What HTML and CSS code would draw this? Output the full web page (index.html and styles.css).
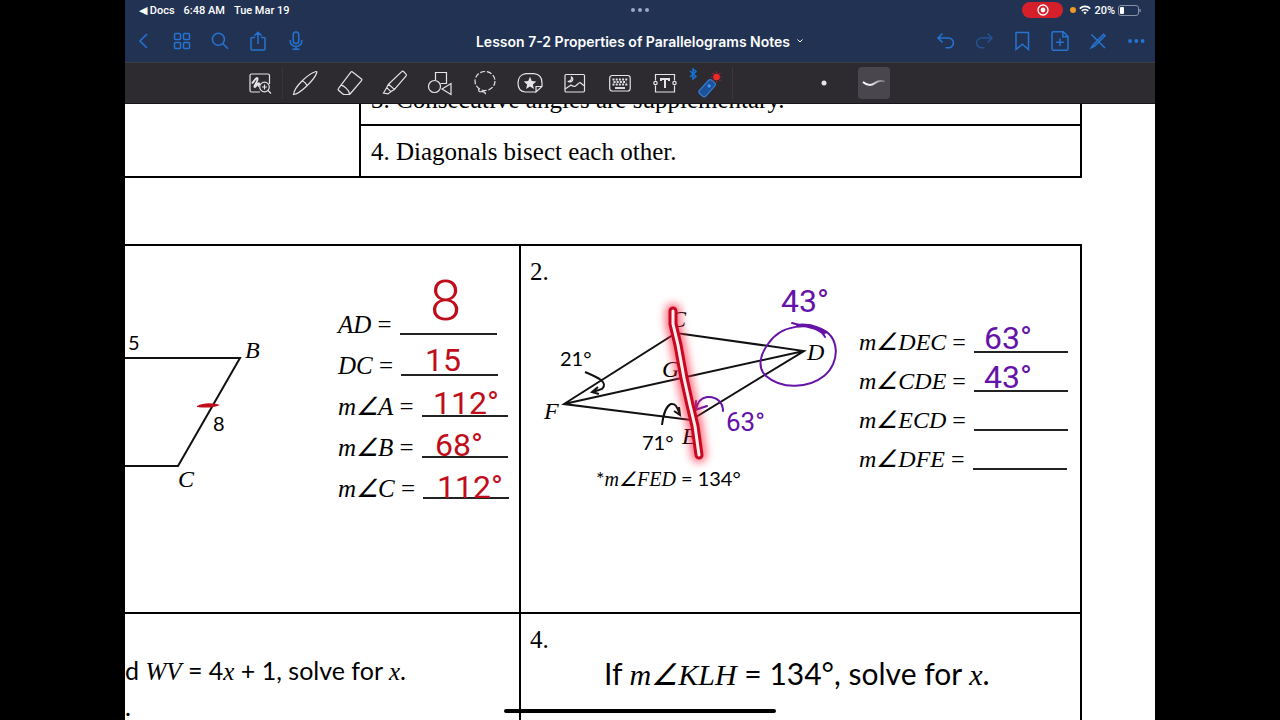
FILE: index.html
```html
<!DOCTYPE html>
<html lang="en">
<head>
  <meta charset="UTF-8">
  <title>Lesson 7-2 Properties of Parallelograms Notes</title>
  <link rel="stylesheet" href="styles.css">
</head>
<body>
  <div class="tablet">
    <header class="titlebar">
      <div class="status">
        <div class="status-left">
          <a href="#docs">◀ Docs</a>
          <span>6:48 AM</span>
          <span>Tue Mar 19</span>
        </div>
        <div class="status-dots"><i></i><i></i><i></i></div>
        <div class="status-right">
          <span class="recording">
            <svg width="12" height="12" viewBox="0 0 12 12"><circle cx="6" cy="6" r="5" fill="none" stroke="#fff" stroke-width="1.3"/><circle cx="6" cy="6" r="2.4" fill="#fff"/></svg>
          </span>
          <span class="mic-dot"></span>
          <svg width="12" height="10" viewBox="0 0 12 10" fill="none" stroke="#fff" stroke-width="1.7"><path d="M.8 3.6a7.4 7.4 0 0 1 10.4 0M2.8 5.8a4.6 4.6 0 0 1 6.4 0"/><path d="M6 9.4 4.4 7.6a2.3 2.3 0 0 1 3.2 0z" fill="#fff" stroke="none"/></svg>
          <span>20%</span>
          <svg width="23" height="11" viewBox="0 0 23 11"><rect x=".5" y=".5" width="20" height="10" rx="2.5" fill="none" stroke="#8791a5"/><rect x="2" y="2" width="4" height="7" rx="1" fill="#fff"/><path d="M22 4v3" stroke="#8791a5" stroke-width="1.4"/></svg>
        </div>
      </div>
      <nav class="nav">
        <div class="nav-group">
          <button aria-label="Back"><svg viewBox="0 0 20 20"><path d="M13 3 6 10l7 7"/></svg></button>
          <button aria-label="Pages"><svg viewBox="0 0 20 20"><rect x="2.5" y="2.5" width="6" height="6" rx="1"/><rect x="11.5" y="2.5" width="6" height="6" rx="1"/><rect x="2.5" y="11.5" width="6" height="6" rx="1"/><rect x="11.5" y="11.5" width="6" height="6" rx="1"/></svg></button>
          <button aria-label="Search"><svg viewBox="0 0 20 20"><circle cx="8.4" cy="8.2" r="6"/><path d="m13 12.8 5 5"/></svg></button>
          <button aria-label="Share"><svg viewBox="0 0 20 20"><path d="M7 6.5H4a1 1 0 0 0-1 1V18a1 1 0 0 0 1 1h12a1 1 0 0 0 1-1V7.500a1 1 0 0 0-1-1h-3M10 13V1.500M6.500 4.600 10 1.200l3.500 3.400"/></svg></button>
          <button aria-label="Record audio"><svg viewBox="0 0 20 20"><rect x="7.200" y="1" width="5.600" height="11.500" rx="2.800"/><path d="M4.200 9v1.200a5.800 5.200 0 0 0 11.600 0V9M10 15.500V18M6.500 18.300h7"/></svg></button>
        </div>
        <button class="doc-title">Lesson 7-2 Properties of Parallelograms Notes
          <svg viewBox="0 0 8 6"><path d="M1.500 1.500 4 4l2.500-2.500"/></svg>
        </button>
        <div class="nav-group nav-right">
          <button aria-label="Undo"><svg viewBox="0 0 20 20"><path d="M6.500 2.500 2 7l4.500 4.500M2 7h10.500a4.900 4.900 0 0 1 0 9.800H9.500"/></svg></button>
          <button aria-label="Redo" disabled><svg viewBox="0 0 20 20"><path d="M13.500 2.500 18 7l-4.500 4.500M18 7H7.500a4.900 4.900 0 0 0 0 9.800h3"/></svg></button>
          <button aria-label="Bookmark"><svg viewBox="0 0 20 20"><path d="M4 1.500h12.500v17l-6.200-5.300L4 18.500z"/></svg></button>
          <button aria-label="Add page"><svg viewBox="0 0 20 20"><path d="M3.500.7h9.700L18 5.500v12.200a1.500 1.500 0 0 1-1.500 1.500h-13A1.500 1.500 0 0 1 2 17.700V2.200A1.500 1.500 0 0 1 3.500.7zM12.800.9v4.900h5M10 7.500v7.600M6.200 11.300h7.600"/></svg></button>
          <button aria-label="Drawing tools"><svg viewBox="0 0 20 20"><path d="M3.500 3.500 17 17M3.500 16.500l2-3L15.500 3.300l1.500 1.400L7 14.800z"/></svg></button>
          <button aria-label="More"><svg viewBox="0 0 20 20" class="solid"><circle cx="4" cy="10" r="1.900"/><circle cx="10.300" cy="10" r="1.900"/><circle cx="16.600" cy="10" r="1.900"/></svg></button>
        </div>
      </nav>
    </header>

    <div class="toolbar">
      <button aria-label="Zoom window"><svg viewBox="0 0 26 26"><path d="M22.500 14V5.500a1.500 1.500 0 0 0-1.500-1.500H4.500A1.500 1.500 0 0 0 3 5.500v15A1.500 1.500 0 0 0 4.500 22H13"/><path d="M5 13.500c2-2.500 4.500-6.500 5.500-5.200 1.300 1.600-4.300 8.500-2.800 8.700 1.300.1 3-4.500 4.300-3.700.8.500-1.200 3 .2 3" stroke-width="1.900"/><circle cx="17.500" cy="17" r="4.800"/><path d="m21 20.500 3 3M17.500 14.600v4.800M15.100 17h4.800"/></svg></button>
      <button aria-label="Pen" class="divided"><svg viewBox="0 0 26 26"><path d="M1.500 24.500c.5-3.500 3.500-8.500 8-13C14.500 6.500 20 2.500 24 1.500c.7-.1 1 .3.800 1-1 3.500-5.300 9-10.300 13.700-4.500 4.300-9 7.800-13 8.300zM10.200 10.800c2 .8 3.800 2.500 4.800 4.700"/></svg></button>
      <button aria-label="Eraser"><svg viewBox="0 0 26 26"><path d="M15.200 1.800 24.500 9a1 1 0 0 1 .2 1.300L13.500 23.500c-.6.700-1.300 1-2.200 1H7.500c-.8 0-1.300-.2-1.900-.7l-3.800-3.300a1.500 1.500 0 0 1-.2-2.100L14 2a1 1 0 0 1 1.200-.2zM4 15.200c3 .6 7.700 4.200 8.600 8.600"/></svg></button>
      <button aria-label="Highlighter"><svg viewBox="0 0 26 26"><path d="M21.500 1.500 24 4.200c.5.600.5 1.200.1 1.800L12.500 19.500l-6-5.300L19.700 1.600a1.200 1.200 0 0 1 1.800-.1zM6.500 14.200l-1.800 3.500 4.300 3.900 3.500-2.100M4.700 17.700 1.500 23l4.500.9 3-2.300"/></svg></button>
      <button aria-label="Shapes"><svg viewBox="0 0 26 26"><path d="M8.500 10V2.500h11V12M8.500 2.500h11v11h-6"/><circle cx="7.500" cy="16.500" r="6"/><path d="M24 13.500v11l-9-5.500z"/></svg></button>
      <button aria-label="Lasso"><svg viewBox="0 0 26 26"><ellipse cx="13" cy="11" rx="10" ry="9.500" stroke-dasharray="5 1.800"/><path d="M7 18.500c-1.500 3 .5 3.500 3 3.200 2-.2 3.300.8 3.500 2.500"/></svg></button>
      <button aria-label="Elements"><svg viewBox="0 0 26 26"><path d="M19 22H8C3.500 21.500 1 18 1 13s3-8.800 8-9.300h8c5.300.5 8 4.300 8 9.300v3.500L19 22v-5.500h6"/><path class="solid" d="m13 6.800 1.800 4.300 4.500.4-3.400 3 1 4.500-3.900-2.400L9.100 19l1-4.500-3.400-3 4.500-.4z"/></svg></button>
      <button aria-label="Image"><svg viewBox="0 0 26 26"><rect x="3" y="4.500" width="19.500" height="17.500" rx="1.200"/><path d="M3 19c2.500-1.300 4.500-3 6-4 1.500 1 2.500 2.300 4.500 1 2-1.200 2.500-3 4.500-3.500 1.500 1 2.500 2.300 4.500 3.300M9.500 7c3 2 .5 6-3.800 4.500C8.500 11.500 10 9.500 9.500 7z"/></svg></button>
      <button aria-label="Keyboard"><svg viewBox="0 0 26 26"><rect x="2.700" y="5.500" width="20.500" height="15.500" rx="2.500"/><path d="M5.500 9.500h15M6.500 12h13M5.500 14.500h15" stroke-dasharray="2 1.200" stroke-width="1.900"/><path d="M8 18h10" stroke-width="1.900"/></svg></button>
      <button aria-label="Text box"><svg viewBox="0 0 26 26"><path d="M3.500 10.500v-6h19v6M3.500 15.500V22h19v-6.500"/><circle cx="3.500" cy="13" r="1.700"/><circle cx="22.500" cy="13" r="1.700"/><path d="M9 11V9h8v2M13 9v9" stroke-width="2"/></svg></button>
      <button aria-label="Laser pointer" class="laser-tool"><svg viewBox="0 0 36 30"><path d="m3 3 6 5.500L6 11V1l3 2.500L3 9" stroke="#1674d8" stroke-width="1.500"/><g transform="rotate(42 20 20)"><rect x="16" y="11" width="8.500" height="18" rx="2.500" fill="#1d5199" stroke="#347fd6"/><circle cx="20.200" cy="17" r="1.600" fill="#499cf5" stroke="none"/></g><path d="M29.500 3.500v11M24 9h11M25.600 5.100l7.800 7.800M33.400 5.100l-7.800 7.800" stroke="#b52332" stroke-width="1.200" stroke-dasharray="1.500 1"/><circle cx="29.500" cy="9" r="3.300" fill="#f02828" stroke="none"/></svg></button>
      <div class="stroke-options">
        <button aria-label="Dot"><svg viewBox="0 0 26 26" class="solid"><circle cx="13" cy="13" r="2.500"/></svg></button>
        <button aria-label="Trail" class="selected">
          <svg viewBox="0 0 26 26"><defs><linearGradient id="fade"><stop stop-color="#fff"/><stop offset=".5" stop-color="#ddd"/><stop offset="1" stop-color="#69676d"/></linearGradient></defs><path d="M2 12c4 3.500 8 4 12 1 3-2.200 6-2.800 10-1.500" stroke="url(#fade)" stroke-width="1.800"/></svg>
        </button>
      </div>
    </div>

    <main class="page">
      <section class="properties">
        <div class="properties-side"></div>
        <div class="properties-list">
          <p>3. Consecutive angles are supplementary.</p>
          <p>4. Diagonals bisect each other.</p>
        </div>
      </section>

      <section class="problems">
        <article class="problem problem-1">
          <svg class="figure" width="150" height="180" viewBox="0 0 150 180">
            <path d="M0 34h115L53 142H0"/>
            <text class="measure" x="3" y="26">5</text>
            <text class="measure" x="88" y="107">8</text>
            <text x="120" y="34">B</text>
            <text x="53" y="163">C</text>
          </svg>
          <ul class="answers">
            <li><span><i>AD</i> =</span><span class="blank"></span></li>
            <li><span><i>DC</i> =</span><span class="blank"></span></li>
            <li><span><i>m∠A</i> =</span><span class="blank short"></span></li>
            <li><span><i>m∠B</i> =</span><span class="blank short"></span></li>
            <li><span><i>m∠C</i> =</span><span class="blank short"></span></li>
          </ul>
        </article>

        <article class="problem problem-2">
          <p class="number">2.</p>
          <div class="work">
            <svg class="figure" width="300" height="200" viewBox="0 0 300 200">
              <path d="M24 104 136 33l128 18-113 69zL264 51"/>
              <text x="4" y="119">F</text>
              <text x="130" y="27">C</text>
              <text x="267" y="60">D</text>
              <text x="122" y="77">G</text>
              <text x="142" y="144">E</text>
              <text class="measure" x="20" y="66">21°</text>
              <text class="measure" x="102" y="150">71°</text>
              <path class="arrow" d="M45 72c12 5 24 10 17 17l-9 3m5-5-6 5 7 2M122 125c1-9 4-19 9-21 5-1 6 4 9 10m-6-3 6 4-1-8"/>
              <text class="given" x="56" y="186">*<tspan class="math">m∠FED</tspan> = 134°</text>
            </svg>
            <ul class="answers">
              <li><span><i>m∠DEC</i> =</span><span class="blank"></span></li>
              <li><span><i>m∠CDE</i> =</span><span class="blank"></span></li>
              <li><span><i>m∠ECD</i> =</span><span class="blank"></span></li>
              <li><span><i>m∠DFE</i> =</span><span class="blank"></span></li>
            </ul>
          </div>
        </article>

        <article class="problem problem-3">
          <p class="question">d <i>WV</i> = 4<i>x</i> + 1, solve for <i>x</i>.</p>
          <p class="question">.</p>
        </article>

        <article class="problem problem-4">
          <p class="number">4.</p>
          <p class="question large">If <i>m∠KLH</i> = 134°, solve for <i>x</i>.</p>
        </article>
      </section>

      <!-- handwriting and laser pointer, drawn over the sheet -->
      <svg class="ink" width="1030" height="616" viewBox="125 104 1030 616">
        <g class="red-ink">
          <text class="big" x="430" y="320">8</text>
          <text x="425" y="371">15</text>
          <text x="433" y="414">112°</text>
          <text x="435" y="456">68°</text>
          <text x="437" y="498">112°</text>
          <path class="tick" d="M197 406c7-4 17-3 23-1-7 3-15 3-23 2z"/>
        </g>
        <g class="purple-ink">
          <text x="781" y="312">43°</text>
          <text class="small" x="726" y="431">63°</text>
          <text x="984" y="349">63°</text>
          <text x="984" y="388">43°</text>
          <path d="M792 323c12 4 29 4 33 14M825 333c-15-11-44-9-57 11-8 11-11 24-2 32 16 14 43 12 58 0 16-13 17-40-5-48-7-3-15-4-22-3M723 411c0-9-7-15-16-14-7 1-10 6-11 13m0-9-1 9 12-4"/>
        </g>
        <g class="laser">
          <path class="laser-glow" d="M673 311v13l5 21 6 33 6 27 5 21 4 29"/>
          <path class="laser-edge" d="M673 311v13l5 21 6 33 6 27 5 21 4 29"/>
          <path class="laser-core" d="M673 311v13l5 21 6 33 6 27 5 21 4 29"/>
        </g>
      </svg>
    </main>
    <div class="home-indicator"></div>
  </div>
</body>
</html>
```
FILE: styles.css
```css
* {
  box-sizing: border-box;
}
body {
  margin: 0;
  padding: 0 125px;
  background: #000;
  font-family: Inter, "Liberation Sans", sans-serif;
}
p, ul {
  margin: 0;
  padding: 0;
}
button {
  display: flex;
  align-items: center;
  justify-content: center;
  padding: 0;
  border: none;
  background: none;
  color: inherit;
  font-family: inherit;
  cursor: pointer;
}
svg {
  display: block;
  flex-shrink: 0;
}
.tablet {
  position: relative;
  display: flex;
  flex-direction: column;
  height: 100vh;
  overflow: hidden;
  background: #fff;
}

/* top bar */
.titlebar {
  background: #223252;
  color: #fff;
}
.status {
  display: grid;
  grid-template-columns: 1fr auto 1fr;
  align-items: center;
  height: 20px;
  padding: 0 14px;
  font-family: Roboto, sans-serif;
  font-size: 11px;
  font-weight: 500;
}
.status a {
  color: inherit;
  text-decoration: none;
}
.status-left {
  display: flex;
  gap: 9px;
}
.status-dots {
  display: flex;
  gap: 3px;
}
.status-dots i {
  width: 4px;
  height: 4px;
  border-radius: 50%;
  background: #9aa9cb;
}
.status-right {
  display: flex;
  align-items: center;
  justify-content: flex-end;
  gap: 3px;
}
.recording {
  display: flex;
  align-items: center;
  justify-content: center;
  width: 41px;
  height: 16px;
  margin-right: 4px;
  border-radius: 8px;
  background: #d5202b;
}
.mic-dot {
  width: 6px;
  height: 6px;
  border-radius: 50%;
  background: #f09a24;
}
.nav {
  display: grid;
  grid-template-columns: 1fr auto 1fr;
  height: 42px;
  color: #2673d2;
}
.nav-group {
  display: flex;
}
.nav-group button {
  width: 38px;
}
.nav-right {
  justify-content: flex-end;
}
.nav svg {
  width: 20px;
  height: 20px;
  fill: none;
  stroke: currentColor;
  stroke-width: 1.5;
}
.nav button:disabled {
  opacity: 0.5;
}
.nav .doc-title {
  gap: 6px;
  color: #fff;
  font-size: 14px;
  font-weight: 600;
}
.nav .doc-title svg {
  width: 8px;
  height: 6px;
  stroke-width: 1;
}
.nav svg.solid, .toolbar .solid {
  fill: currentColor;
  stroke: none;
}

/* drawing tools */
.toolbar {
  display: flex;
  align-items: center;
  height: 42px;
  padding-left: 112px;
  border-top: 1px solid #3b3d44;
  border-bottom: 1px solid #17161a;
  background: #2d2b30;
  color: #e4e4e6;
}
.toolbar button {
  width: 45px;
  height: 32px;
}
.toolbar svg {
  width: 26px;
  height: 26px;
  fill: none;
  stroke: currentColor;
  stroke-width: 1.2;
}
.toolbar .divided {
  border-left: 1px solid #36343a;
}
.toolbar .laser-tool {
  justify-content: flex-start;
}
.toolbar .laser-tool svg {
  width: 36px;
  height: 30px;
}
.stroke-options {
  display: flex;
  align-items: center;
  gap: 18px;
  height: 32px;
  padding-left: 75px;
  border-left: 1px solid #3a383e;
}
.toolbar .stroke-options button {
  width: 32px;
}
.stroke-options .selected {
  border-radius: 4px;
  background: #49474d;
}

/* worksheet */
.page {
  position: relative;
  flex: 1;
  overflow: hidden;
  padding-right: 73px;
  color: #000;
  font-family: "Liberation Serif", serif;
  font-size: 25px;
}
.properties {
  display: flex;
  margin-top: -30px;
  border-right: 2px solid #000;
  border-bottom: 2px solid #000;
}
.properties-side {
  width: 234px;
}
.properties-list {
  flex: 1;
  border-left: 2px solid #000;
}
.properties-list p {
  padding: 2px 0 0 10px;
  line-height: 48px;
}
.properties-list p + p {
  border-top: 2px solid #000;
}
.problems {
  display: grid;
  grid-template-columns: 396px 1fr;
  grid-template-rows: 368px 120px;
  margin-top: 66px;
  border-top: 2px solid #000;
}
.problem {
  border-right: 2px solid #000;
}
.problem-1, .problem-2 {
  border-bottom: 2px solid #000;
}
.problem-1 {
  display: flex;
  gap: 63px;
  padding-top: 58px;
}
.problem-1 .figure {
  margin-top: 20px;
}
.problem-2 .work {
  display: flex;
  gap: 19px;
  padding-left: 19px;
}
.problem-2 .figure {
  margin-top: 12px;
}
.number {
  padding: 10px 9px 0;
  line-height: 32px;
}
.figure {
  overflow: visible;
}
.figure path {
  fill: none;
  stroke: #111;
  stroke-width: 2;
}
.figure text {
  font-size: 24px;
  font-style: italic;
}
.figure .measure, .figure .given {
  font-family: Lato, sans-serif;
  font-size: 20px;
  font-style: normal;
}
.figure .math {
  font-family: "Liberation Serif", serif;
  font-style: italic;
}
.answers {
  list-style: none;
}
.answers li {
  display: flex;
  gap: 8px;
  height: 41px;
  line-height: 41px;
}
.problem-2 .answers {
  padding-top: 35px;
  font-size: 24px;
}
.problem-2 .answers li {
  height: 39px;
  line-height: 39px;
}
.blank {
  width: 97px;
  height: 31px;
  border-bottom: 2px solid #222;
}
.blank.short {
  width: 86px;
}
.problem-2 .blank {
  width: 94px;
  height: 30px;
}
.question {
  font-family: Lato, sans-serif;
  font-size: 25px;
  line-height: 34px;
}
.question i {
  font-family: "Liberation Serif", serif;
}
.problem-3 {
  padding-top: 39px;
}
.problem-4 .large {
  padding-left: 83px;
  font-size: 30px;
}

/* ink layer */
.ink {
  position: absolute;
  top: 0;
  left: 0;
  fill: none;
  stroke-linecap: round;
  stroke-linejoin: round;
}
.ink text {
  font-family: Roboto, sans-serif;
  font-size: 32px;
  stroke: none;
}
.ink .big {
  font-size: 56px;
  font-weight: 300;
}
.ink .small {
  font-size: 26px;
}
.red-ink text, .tick {
  fill: #c00d1c;
}
.purple-ink text {
  fill: #6512a8;
}
.purple-ink path {
  stroke: #6512a8;
  stroke-width: 2;
}
.laser-glow {
  stroke: #ff2945;
  stroke-width: 15;
  opacity: 0.7;
  filter: blur(4px);
}
.laser-edge {
  stroke: #c80820;
  stroke-width: 9;
}
.laser-core {
  stroke: #fff0ef;
  stroke-width: 3;
}
.home-indicator {
  position: absolute;
  bottom: 7px;
  left: 50%;
  width: 272px;
  height: 4px;
  border-radius: 2px;
  background: #000;
  transform: translateX(-50%);
}
```
